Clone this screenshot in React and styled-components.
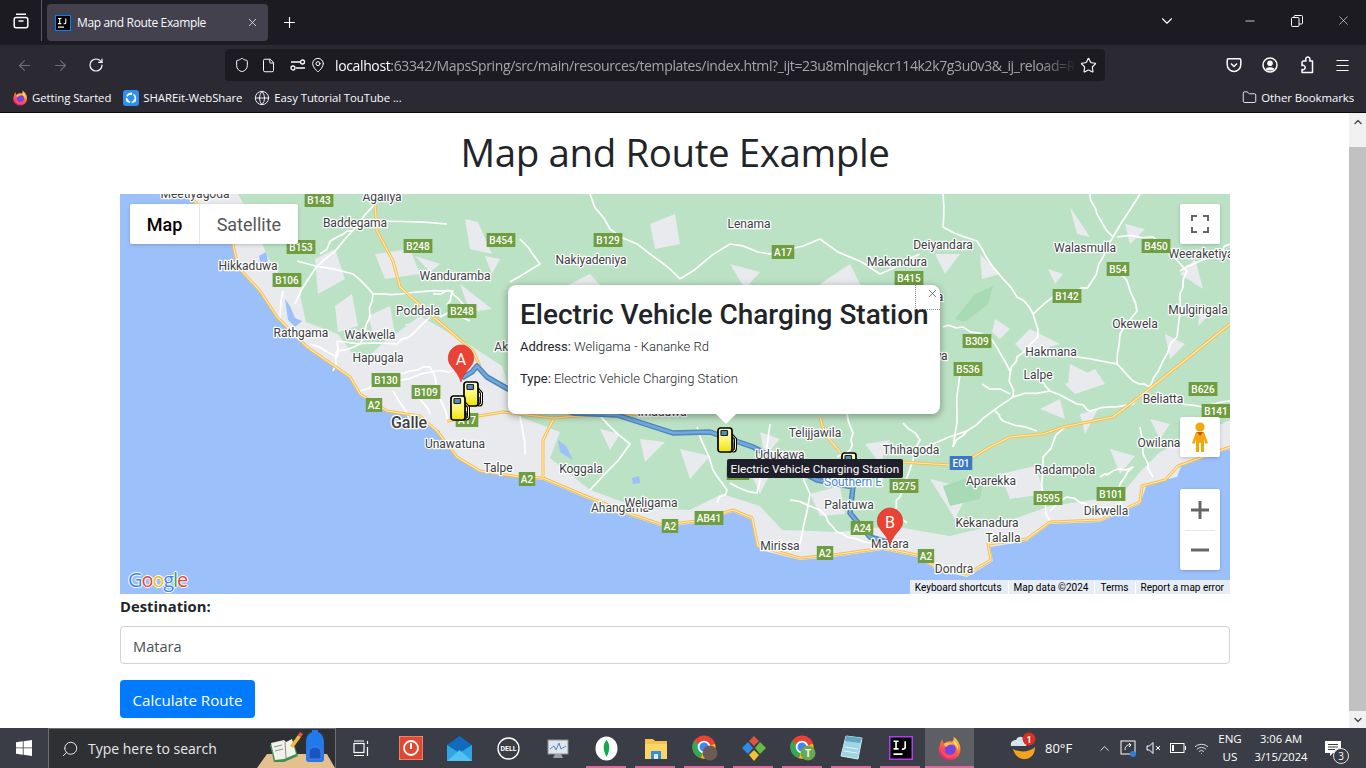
import React from "react";
import styled, { createGlobalStyle } from "styled-components";
import {
  ArrowLeft,
  ArrowRight,
  ChevronDown,
  ChevronUp,
  File,
  Folder,
  Globe,
  MapPin,
  Menu,
  Minus,
  Plus,
  RotateCw,
  Search,
  Shield,
  Star,
  Wifi,
  X,
} from "lucide-react";

const GlobalStyle = createGlobalStyle`
  html, body {
    margin: 0;
    padding: 0;
    height: 100%;
    overflow: hidden;
    font-family: "Open Sans", "Liberation Sans", sans-serif;
  }
  * { box-sizing: border-box; }
`;

const Screen = styled.div`
  width: 1366px;
  height: 768px;
  display: flex;
  flex-direction: column;
  overflow: hidden;
  background: #fff;
`;

/* browser chrome */
const TabStrip = styled.div`
  height: 45px;
  display: flex;
  align-items: flex-start;
  background: #1c1b22;
  color: #fbfbfe;
`;

const ViewButton = styled.div`
  width: 42px;
  height: 41px;
  display: flex;
  align-items: center;
  justify-content: center;
  border-right: 1px solid #5b5b66;
`;

const Tab = styled.div`
  width: 221px;
  height: 37px;
  margin: 4px 0 0 5px;
  padding: 0 9px 0 8px;
  display: flex;
  align-items: center;
  background: #42414d;
  border-radius: 4px;
  font-size: 12px;
  letter-spacing: -0.35px;
`;

const TabTitle = styled.span`
  flex: 1;
  margin-left: 6px;
  white-space: nowrap;
`;

const NewTab = styled.div`
  width: 42px;
  height: 37px;
  margin-top: 4px;
  display: flex;
  align-items: center;
  justify-content: center;
`;

const StripSpacer = styled.div`
  flex: 1;
`;

const WindowButton = styled.div`
  width: ${(p) => p.$w || 47}px;
  height: 41px;
  display: flex;
  align-items: center;
  justify-content: center;
`;

const Toolbar = styled.div`
  height: 40px;
  display: flex;
  align-items: center;
  background: #2b2a33;
  color: #fbfbfe;
`;

const NavButton = styled.div`
  width: 36px;
  height: 36px;
  display: flex;
  align-items: center;
  justify-content: center;
  color: ${(p) => (p.$off ? "#6f6e76" : "#fbfbfe")};
`;

const NavGroup = styled.div`
  width: 225px;
  padding-left: 6px;
  display: flex;
`;

const UrlBar = styled.div`
  width: 880px;
  height: 32px;
  padding: 0 6px 0 8px;
  display: flex;
  align-items: center;
  background: #1c1b22;
  border-radius: 4px;
`;

const UrlIcon = styled.div`
  width: ${(p) => p.$w}px;
  display: flex;
  justify-content: center;
  flex: none;
`;

const UrlText = styled.div`
  flex: 1;
  margin-left: 9px;
  overflow: hidden;
  white-space: nowrap;
  font-size: 14px;
  letter-spacing: -0.37px;
  color: #a5a5ab;
  -webkit-mask-image: linear-gradient(to right, #000 95%, transparent 100%);
  mask-image: linear-gradient(to right, #000 95%, transparent 100%);

  b {
    font-weight: 400;
    color: #fbfbfe;
  }
`;

const RightTools = styled.div`
  margin-left: 111px;
  display: flex;
`;

const Bookmarks = styled.div`
  height: 28px;
  padding: 0 12px 2px 12px;
  display: flex;
  align-items: center;
  background: #2b2a33;
  color: #fbfbfe;
  font-size: 11.4px;
  letter-spacing: -0.08px;
  border-bottom: 1px solid #0c0c0d;
`;

const Bookmark = styled.div`
  display: flex;
  align-items: center;
  gap: 4px;
  margin-right: 12px;
  white-space: nowrap;

  &:last-child {
    margin: 0 0 0 auto;
  }
`;

/* page */
const PageRow = styled.div`
  flex: 1;
  min-height: 0;
  display: flex;
`;

const Page = styled.main`
  flex: 1;
  padding: 15px 119px 0 120px;
  color: #212529;
`;

const Heading = styled.h1`
  margin: 0 0 18px;
  text-align: center;
  font-size: 38.5px;
  line-height: 48px;
  font-weight: 400;
  letter-spacing: -0.4px;
`;

const MapBox = styled.div`
  position: relative;
  width: 1110px;
  height: 400px;
  overflow: hidden;
  background: #9cc0f9;
`;

const MapCanvas = styled.svg`
  display: block;
`;

const Place = styled.text`
  font: ${(p) => (p.$big ? "500 16px" : "400 12px")} Roboto, sans-serif;
  fill: ${(p) => p.$fill || "#3c4043"};
  stroke: #fff;
  stroke-width: 2.5px;
  stroke-linejoin: round;
  paint-order: stroke;
  text-anchor: middle;
  dominant-baseline: central;
`;

const ShieldText = styled.text`
  font: 500 10px Roboto, sans-serif;
  fill: #fff;
  text-anchor: middle;
  dominant-baseline: central;
`;

const PinLetter = styled.text`
  font: 400 16px Roboto, sans-serif;
  fill: #fff;
  text-anchor: middle;
  dominant-baseline: central;
`;

const MapTypes = styled.div`
  position: absolute;
  left: 10px;
  top: 10px;
  height: 40px;
  display: flex;
  background: #fff;
  border-radius: 2px;
  box-shadow: 0 1px 4px -1px rgba(0, 0, 0, 0.3);
  font: 18px Roboto, sans-serif;
`;

const MapType = styled.div`
  height: 40px;
  padding: 0 16.7px;
  display: flex;
  align-items: center;
  color: ${(p) => (p.$on ? "#000" : "#565656")};
  font-weight: ${(p) => (p.$on ? 500 : 400)};
  border-right: ${(p) => (p.$on ? "1px solid #e6e6e6" : "0")};
`;

const CtrlButton = styled.div`
  position: absolute;
  right: 10px;
  top: ${(p) => p.$top}px;
  width: 40px;
  height: ${(p) => p.$h || 40}px;
  display: flex;
  flex-direction: column;
  align-items: center;
  justify-content: center;
  background: #fff;
  border-radius: 2px;
  box-shadow: 0 1px 4px -1px rgba(0, 0, 0, 0.3);
  color: #666;
`;

const ZoomPart = styled.div`
  width: 30px;
  height: 40px;
  display: flex;
  align-items: center;
  justify-content: center;
  border-top: ${(p) => (p.$line ? "1px solid #e6e6e6" : "0")};
`;

const GoogleLogo = styled.div`
  position: absolute;
  left: 8px;
  bottom: 2px;
  font: 500 20px/24px "Open Sans", sans-serif;
  letter-spacing: -1.1px;
  text-shadow: -1px 0 #fff, 1px 0 #fff, 0 -1px #fff, 0 1px #fff;
`;

const LogoLetter = styled.span`
  color: ${(p) => p.$c};
`;

const Attribution = styled.div`
  position: absolute;
  right: 0;
  bottom: 0;
  height: 14px;
  padding-top: 1px;
  display: flex;
  align-items: center;
  background: rgba(245, 245, 245, 0.85);
  font: 10px/13px Roboto, sans-serif;
  color: #000;
`;

const AttrItem = styled.span`
  padding: 0 6px 0 5px;
  border-left: 1px solid #fff;
  white-space: nowrap;

  &:first-child {
    border-left: 0;
  }
`;

const Popup = styled.div`
  position: absolute;
  left: 388px;
  top: 91px;
  width: 432px;
  height: 129px;
  padding: 13px 12px 0;
  background: #fff;
  border-radius: 8px;
  box-shadow: 0 2px 7px 1px rgba(0, 0, 0, 0.3);
  font: 300 13px/19px Roboto, sans-serif;
  color: #212529;

  &::after {
    content: "";
    position: absolute;
    left: 206px;
    top: 127px;
    width: 0;
    height: 0;
    border-left: 12px solid transparent;
    border-right: 12px solid transparent;
    border-top: 12px solid #fff;
  }
`;

const PopupTitle = styled.h3`
  margin: 0 0 5px;
  font: 500 28px/34px Roboto, sans-serif;
  white-space: nowrap;
`;

const PopupLine = styled.p`
  margin: 0 0 12.5px;

  strong {
    font-weight: 400;
  }
`;

const PopupClose = styled.div`
  position: absolute;
  right: 0;
  top: 0;
  width: 25px;
  height: 25px;
  padding: 2px 1px 0 0;
  display: flex;
  align-items: flex-start;
  justify-content: flex-end;
  color: #555;
  border-left: 1px dotted #888;
  border-bottom: 1px dotted #888;
`;

const Tip = styled.div`
  position: absolute;
  left: 607px;
  top: 265px;
  height: 19px;
  padding: 0 3.5px;
  display: flex;
  align-items: center;
  border-radius: 2px;
  background: #1f1f2b;
  color: #fff;
  font: 11.7px Roboto, sans-serif;
  white-space: nowrap;
`;

const Label = styled.label`
  display: block;
  margin: 4px 0 11px;
  font-size: 14.8px;
  line-height: 17px;
  font-weight: 700;
  color: #212529;
`;

const TextInput = styled.input`
  display: block;
  width: 100%;
  height: 38px;
  padding: 7px 12px 5px;
  border: 1px solid #ced4da;
  border-radius: 4px;
  font: 14.6px "Open Sans", sans-serif;
  color: #495057;
  outline: none;
`;

const SubmitButton = styled.button`
  display: block;
  margin-top: 16px;
  width: 135px;
  height: 38px;
  padding: 2px 0 0;
  border: 0;
  border-radius: 4px;
  background: #007bff;
  color: #fff;
  font: 15.15px "Open Sans", sans-serif;
`;

const ScrollBar = styled.div`
  width: 17px;
  display: flex;
  flex-direction: column;
  align-items: center;
  background: #f1f1f1;
`;

const ScrollArrow = styled.div`
  height: 17px;
  display: flex;
  align-items: center;
  justify-content: center;
  color: #505050;
`;

const ScrollThumb = styled.div`
  width: 17px;
  height: 564px;
  margin: 17px 0 0;
  background: #c1c1c1;
`;

/* taskbar */
const Taskbar = styled.footer`
  height: 40px;
  display: flex;
  align-items: stretch;
  background: #3a3d45;
  color: #fff;
`;

const StartButton = styled.div`
  width: 48px;
  display: flex;
  align-items: center;
  justify-content: center;
`;

const SearchBox = styled.div`
  width: 288px;
  padding-left: 12px;
  display: flex;
  align-items: center;
  gap: 9px;
  background: #2f3033;
  border: 1px solid #6b6e73;
  border-width: 1px 1px 0 1px;
  font-size: 14px;
  color: #e8e8e8;
`;

const TaskIcons = styled.div`
  margin-left: 1px;
  display: flex;
`;

const TaskIcon = styled.div`
  width: 49px;
  display: flex;
  align-items: center;
  justify-content: center;
  position: relative;
  background: ${(p) => (p.$active ? "#5e5f64" : "transparent")};

  &::after {
    content: "";
    display: ${(p) => (p.$open ? "block" : "none")};
    position: absolute;
    left: ${(p) => (p.$active ? 0 : 4)}px;
    right: ${(p) => (p.$active ? 0 : 5)}px;
    bottom: 0;
    height: 2px;
    background: #e0699a;
  }
`;

const Weather = styled.div`
  width: 80px;
  margin-left: 36px;
  display: flex;
  align-items: center;
  gap: 7px;
  font-size: 13px;
`;

const Tray = styled.div`
  width: 120px;
  padding: 0 1px 0 7px;
  display: flex;
  align-items: center;
  justify-content: space-between;
`;

const Lang = styled.div`
  width: 40px;
  padding-top: 2px;
  text-align: center;
  font-size: 11.6px;
  line-height: 18px;
`;

const Clock = styled.div`
  width: 62px;
  padding-top: 2px;
  text-align: center;
  font-size: 11.2px;
  line-height: 18px;
`;

const Notify = styled.div`
  position: relative;
  flex: 1;
  padding-left: 13px;
  display: flex;
  align-items: center;
`;

const NotifyBadge = styled.span`
  position: absolute;
  left: 21px;
  top: 20px;
  width: 16px;
  height: 16px;
  border: 1px solid #ddd;
  border-radius: 50%;
  background: #3a3d45;
  font-size: 10px;
  line-height: 14px;
  text-align: center;
`;

/* map data, in map coordinates */
const landEdge =
  "68,0 113,50 118,73 140,97 157,123 187,153 230,183 240,200 267,217 300,222 317,237 337,263 360,277 400,283 423,286 463,303 513,323 543,333 577,329 613,318 632,326 640,356 680,366 713,363 763,356 797,363 817,376 847,383 873,367 870,353 907,347 930,330 980,328 1020,310 1027,290 1057,283 1062,270 1110,255 1110,0";

const greenEdge =
  "118,0 135,30 147,62 160,82 178,92 186,128 218,140 240,170 262,150 300,122 345,148 382,172 398,222 440,238 430,264 470,296 520,314 570,316 602,300 640,312 662,336 720,338 772,332 830,342 880,330 930,312 1000,302 1020,278 1040,258 1110,226 1110,0";

const grayPatches = [
  "195,65 215,55 225,85 198,100",
  "255,60 290,55 300,80 265,85",
  "345,25 358,28 372,60 350,55",
  "295,62 320,70 310,78",
  "365,62 380,65 372,80",
  "340,90 372,115 350,118",
  "215,112 232,100 238,132 218,138",
  "248,122 270,112 275,140 255,145",
  "285,130 300,128 292,150",
  "168,100 182,92 178,118",
  "440,95 470,80 490,102 450,110",
  "530,30 555,20 560,50 535,55",
  "610,70 640,78 625,95",
  "700,90 730,70 745,100 715,105",
  "480,235 500,240 490,256",
  "520,245 545,248 525,268",
  "560,255 590,262 570,285",
  "640,238 660,245 645,262",
  "625,265 650,280 640,300",
  "690,300 720,292 725,320 700,322",
  "745,250 770,246 760,270",
  "810,285 850,295 835,325",
  "880,280 915,272 925,300 890,305",
  "950,13 970,43 957,40",
  "860,60 880,80 862,85",
  "875,125 890,135 880,145 872,138",
  "910,135 940,150 905,160 895,150",
  "950,170 970,180 948,190",
  "945,190 975,175 985,190 955,200",
  "1005,30 1025,35 1010,50",
  "928,75 943,80 935,90",
  "1080,110 1090,120 1078,132",
  "1030,225 1050,230 1040,245",
  "990,255 1015,262 1000,280",
  "1060,80 1075,65 1083,95",
  "815,60 840,60 825,80",
  "780,130 800,125 790,150",
  "800,185 815,180 808,205",
  "920,215 940,205 945,225",
  "960,220 978,215 965,240",
  "1045,140 1065,150 1050,165",
];

const darkGreen = ["835,125 855,100 873,92 868,110 845,128", "823,292 845,285 863,290 860,305 830,312"];

const water = [
  "165,105 170,112 175,124 182,127 175,133 168,126",
  "139,62 146,58 148,68 141,74",
  "438,246 446,252 453,266 446,262 440,258",
  "512,284 519,282 520,289 513,290",
  "313,234 320,237 317,245 311,243",
];

const roads = [
  "970,0 977,20 993,43 983,63 970,90 957,97 933,103 913,120 918,143 897,163 890,180 893,203 873,217 847,237 833,253",
  "823,0 823,33 857,47 873,73 897,103 913,120",
  "993,43 1020,0",
  "997,43 1033,43 1067,77 1060,100 1057,143 1043,167 1030,193",
  "918,157 957,163 997,170 1013,187 1030,193",
  "997,170 1000,140 1017,117 1007,87 998,80",
  "930,197 957,210 970,217 1013,210 1030,193",
  "920,187 930,197 893,203",
  "875,217 883,227 917,237",
  "945,233 923,263 923,303 930,327",
  "1060,77 1080,67 1097,57 1110,50",
  "1057,207 1083,213 1110,207",
  "1020,233 1023,260 1033,283",
  "980,283 993,277 1013,273 1000,290 1000,310",
  "930,317 947,303 967,310",
  "823,133 843,133 870,143 890,177",
  "862,190 890,200",
  "847,237 790,257",
  "177,67 233,80 253,100 250,123 240,150 217,157 213,177",
  "237,33 257,27 327,30",
  "255,10 225,45 195,75 175,110",
  "253,100 280,100 330,97 343,110 320,123",
  "310,123 293,140 277,150 217,147",
  "277,187 317,177 333,177 353,167",
  "273,197 290,227",
  "297,200 310,220",
  "163,97 160,125",
  "233,37 217,43 200,60",
  "217,147 217,163 190,150",
  "290,177 263,183 240,197",
  "290,177 310,173 317,193 328,227",
  "313,100 333,97 327,110 350,127",
  "400,45 420,70 390,88",
  "470,0 490,35 530,60 560,85",
  "560,85 610,50 650,60 700,45 760,80 800,60",
  "577,233 593,276 607,296 597,309",
  "640,286 637,299 610,289",
  "727,219 733,239 730,256 717,263",
  "780,303 773,316 787,329",
  "783,229 800,246 793,266 780,303",
  "840,180 833,253",
  "650,230 640,286",
  "480,222 510,250 470,296",
  "400,222 405,260",
  "673,260 690,300 680,350",
  "670,306 700,316 713,333 727,343 752,349",
];

const highways = [
  "1110,130 1023,200 993,223 943,233 923,240 890,243 870,253 850,265 830,271 780,268 720,266",
  "68,0 113,50 118,73 140,97 157,123 187,153 230,183 240,200 267,217 300,222 317,237 337,263 360,277 400,283 423,284 463,301 513,321 543,331 577,327 613,316 632,324 638,352 680,364 713,361 763,354 797,361 817,374 847,380 871,366 868,350 907,345 930,328 980,326 1020,308 1022,292 1045,286 1058,272 1110,253",
  "255,10 257,37 273,67 280,93 310,120 353,157 360,172",
  "327,227 383,218 433,224 497,219 540,222",
  "433,226 423,246 423,283",
  "700,223 705,240 720,258",
];

const route = "342,184 352,178 357,172 367,183 388,195 453,219 497,221 553,239 590,238 633,253 697,286 733,293 730,319 750,343 770,349";

const places = [
  ["Meetiyagoda", 75, 0],
  ["Agaliya", 262, 3],
  ["Baddegama", 235, 29],
  ["Hikkaduwa", 128, 72],
  ["Wanduramba", 335, 82],
  ["Poddala", 298, 117],
  ["Rathgama", 181, 139],
  ["Wakwella", 250, 141],
  ["Hapugala", 258, 164],
  ["Unawatuna", 335, 250],
  ["Talpe", 378, 274],
  ["Akmeemana", 408, 153],
  ["Lenama", 629, 30],
  ["Nakiyadeniya", 471, 66],
  ["Deiyandara", 823, 51],
  ["Makandura", 777, 68],
  ["Walasmulla", 965, 54],
  ["Weeraketiya", 1081, 60],
  ["Mulgirigala", 1078, 116],
  ["Okewela", 1015, 130],
  ["Hakmana", 931, 158],
  ["Lalpe", 918, 181],
  ["Beliatta", 1043, 205],
  ["Owilana", 1039, 249],
  ["Thihagoda", 791, 256],
  ["Telijjawila", 695, 239],
  ["Imaduwa", 542, 218],
  ["Koggala", 461, 275],
  ["Ahangama", 500, 314],
  ["Weligama", 531, 309],
  ["Mirissa", 660, 352],
  ["Palatuwa", 729, 311],
  ["Radampola", 945, 276],
  ["Aparekka", 871, 287],
  ["Kekanadura", 867, 329],
  ["Talalla", 883, 344],
  ["Dikwella", 986, 317],
  ["Dondra", 834, 375],
  ["Udukawa", 660, 261],
  ["Matara", 770, 350],
  ["Athuraliya", 801, 162],
  ["Mawarala", 797, 103],
];

const shields = [
  ["B143", 199, 6],
  ["B153", 181, 53],
  ["B248", 298, 52],
  ["B454", 381, 46],
  ["B106", 167, 86],
  ["B248", 342, 117],
  ["B130", 266, 186],
  ["B109", 306, 198],
  ["A2", 254, 211],
  ["A17", 347, 226],
  ["B129", 488, 46],
  ["A17", 663, 58],
  ["B415", 789, 84],
  ["B309", 857, 147],
  ["B536", 848, 175],
  ["B142", 947, 102],
  ["B450", 1036, 52],
  ["B54", 998, 75],
  ["B626", 1083, 195],
  ["B141", 1096, 217],
  ["B275", 784, 292],
  ["B595", 928, 304],
  ["B101", 991, 300],
  ["A2", 806, 362],
  ["A2", 407, 285],
  ["A2", 550, 332],
  ["AB41", 589, 324],
  ["A2", 705, 359],
  ["A24", 742, 334],
  ["E01", 841, 269, true],
  ["A17", 618, 279],
];

// small seeded noise so hand-listed roads don't look like straight rulers
const wiggle = (points, amount) => {
  const pts = points.split(" ").map((p) => p.split(",").map(Number));
  let seed = pts.length * 7 + pts[0][0];
  const noise = () => {
    seed = (seed * 9301 + 49297) % 233280;
    return (seed / 233280 - 0.5) * amount * 2;
  };
  const out = [];
  pts.forEach((p, i) => {
    if (i > 0) {
      const a = pts[i - 1];
      [0.33, 0.66].forEach((t) => {
        out.push(`${(a[0] + (p[0] - a[0]) * t + noise()).toFixed(1)},${(a[1] + (p[1] - a[1]) * t + noise()).toFixed(1)}`);
      });
    }
    out.push(p.join(","));
  });
  return out.join(" ");
};

const FuelMarker = ({ x, y }) => (
  <g transform={`translate(${x - 9} ${y - 13})`}>
    <path d="M14 7 L18.5 12 V21 Q18.5 24 16.5 24 Q15 24 15 21 V16" fill="none" stroke="#000" strokeWidth="3" />
    <path d="M14 7 L18.5 12 V21 Q18.5 24 16.5 24 Q15 24 15 21 V16" fill="none" stroke="#fff6a8" strokeWidth="1" />
    <rect x="1" y="1" width="14" height="24" rx="2.5" fill="url(#fuelFill)" stroke="#000" strokeWidth="1.7" />
    <rect x="4" y="3.5" width="6.5" height="5" rx="0.8" fill="#4f8fc0" stroke="#222" strokeWidth="1.2" />
  </g>
);

const RedPin = ({ x, y, letter }) => (
  <g transform={`translate(${x} ${y})`}>
    <path
      d="M0 0 C-2 -7 -6 -11 -9.5 -15.5 C-11.6 -18 -12.7 -20.5 -12.7 -24 C-12.7 -31 -7 -37 0 -37 C7 -37 12.7 -31 12.7 -24 C12.7 -20.5 11.6 -18 9.5 -15.5 C6 -11 2 -7 0 0 Z"
      fill="#ea4335"
      stroke="#c5332a"
      strokeWidth="0.6"
    />
    <PinLetter x="0" y="-23">
      {letter}
    </PinLetter>
  </g>
);

const RoadMap = () => (
  <MapCanvas width="1110" height="400" viewBox="0 0 1110 400">
    <defs>
      <linearGradient id="fuelFill" x1="0" y1="0" x2="0" y2="1">
        <stop offset="0" stopColor="#fffdd0" />
        <stop offset="0.55" stopColor="#fbf56a" />
        <stop offset="1" stopColor="#efe300" />
      </linearGradient>
    </defs>
    <rect width="1110" height="400" fill="#9cc0f9" />
    <polygon points={landEdge} fill="#e8eaed" />
    <polygon points={greenEdge} fill="#bce2c5" />
    {grayPatches.map((p) => (
      <polygon key={p} points={p} fill="#e8eaed" />
    ))}
    {darkGreen.map((p) => (
      <polygon key={p} points={p} fill="#a8dab5" />
    ))}
    {water.map((p) => (
      <polygon key={p} points={p} fill="#9cc0f9" />
    ))}
    {roads.map((p) => (
      <polyline key={p} points={wiggle(p, 2)} fill="none" stroke="#fff" strokeWidth="1.7" strokeLinejoin="round" />
    ))}
    {highways.map((p) => (
      <polyline key={p} points={p} fill="none" stroke="#f7bd4f" strokeWidth="3" strokeLinejoin="round" />
    ))}
    {highways.map((p) => (
      <polyline key={`${p}-in`} points={p} fill="none" stroke="#fde9b0" strokeWidth="1.2" strokeLinejoin="round" />
    ))}
    <polyline points={route} fill="none" stroke="#4f88bd" strokeWidth="5.5" strokeLinejoin="round" />
    <polyline points={route} fill="none" stroke="#74a9dc" strokeWidth="2.5" strokeLinejoin="round" />
    {places.map(([name, x, y]) => (
      <Place key={name} x={x} y={y}>
        {name}
      </Place>
    ))}
    <Place x="733" y="288" $fill="#4a86c8">
      Southern E
    </Place>
    <Place x="289" y="228" $big>
      Galle
    </Place>
    {shields.map(([name, x, y, blue]) => {
      const w = name.length * 6.2 + 4;
      return (
        <g key={`${name}${x}`}>
          <rect x={x - w / 2} y={y - 7} width={w} height="14" fill={blue ? "#3b78c6" : "#6f9e41"} />
          <ShieldText x={x} y={y}>
            {name}
          </ShieldText>
        </g>
      );
    })}
    <RedPin x={341} y={188} letter="A" />
    <FuelMarker x={352} y={200} />
    <FuelMarker x={339} y={214} />
    <FuelMarker x={606} y={246} />
    <FuelMarker x={730} y={271} />
    <RedPin x={770} y={351} letter="B" />
  </MapCanvas>
);

const FirefoxIcon = ({ size = 16 }) => (
  <svg width={size} height={size} viewBox="0 0 32 32">
    <defs>
      <linearGradient id="ffFill" x1="0.8" y1="0" x2="0.25" y2="1">
        <stop offset="0" stopColor="#ffd23f" />
        <stop offset="0.45" stopColor="#ff7139" />
        <stop offset="1" stopColor="#e31587" />
      </linearGradient>
    </defs>
    <path
      d="M27 7 C25 4 23 2 21 1 C22 4 21 6 19 7 C15 6 11 7 9 10 C8 8 7 7 7 4 C5 7 4 9 4 11 C2 15 2 19 3 22 C5 27 10 31 16 31 C24 31 30 25 30 17 C30 13 29 10 27 7 Z"
      fill="url(#ffFill)"
    />
    <circle cx="17" cy="17" r="7" fill="#7542e5" />
    <path d="M5 14 C7 22 13 26 19 24 C23 23 25 20 25 17 C26 22 23 28 16 28 C9 28 5 22 5 14 Z" fill="#ff4f5e" />
    <path d="M9 10 C12 8 18 8 21 11 C17 10 13 12 12 14 C10 14 9 12 9 10 Z" fill="#ffbd4f" />
    <path d="M22 6 C26 9 28 14 27 19 C26 14 24 11 21 10 Z" fill="#ffe57a" />
  </svg>
);

const IntellijIcon = ({ size = 16, edge = "#087cfa" }) => (
  <svg width={size} height={size} viewBox="0 0 16 16">
    <rect x="0.5" y="0.5" width="15" height="15" fill="#000" stroke={edge} />
    <rect x="3" y="11.5" width="6" height="1.2" fill="#fff" />
    <path d="M3 3.5 H6.4 M4.7 3.5 V8.6 M3 8.6 H6.4 M10.8 3.5 V7.4 Q10.8 8.7 9.5 8.7 H8.6" fill="none" stroke="#fff" strokeWidth="1.1" />
  </svg>
);

const ViewIcon = () => (
  <svg width="16" height="16" viewBox="0 0 16 16" fill="none" stroke="#fbfbfe" strokeWidth="1.5">
    <rect x="1.2" y="4.5" width="13.6" height="10.3" rx="2" />
    <path d="M3 1.2 H13 M5.5 8 H10.5" />
  </svg>
);

const RestoreIcon = () => (
  <svg width="12" height="12" viewBox="0 0 12 12" fill="none" stroke="#fbfbfe" strokeWidth="1">
    <rect x="0.5" y="2.5" width="7.5" height="9" rx="1" />
    <path d="M3 2.5 V1.5 Q3 0.5 4 0.5 H10.5 Q11.5 0.5 11.5 1.5 V8 Q11.5 9 10.5 9 H8" />
  </svg>
);

const PermissionIcon = () => (
  <svg width="16" height="12" viewBox="0 0 16 12" fill="none" stroke="#fbfbfe" strokeWidth="1.3">
    <circle cx="3" cy="9" r="2" />
    <circle cx="12.5" cy="3" r="2" />
    <path d="M1 3 H10 M6 9 H15" />
  </svg>
);

const PocketIcon = () => (
  <svg width="16" height="16" viewBox="0 0 16 16" fill="none" stroke="#fbfbfe" strokeWidth="1.5">
    <path d="M2.5 1.8 H13.5 Q14.8 1.8 14.8 3 V7.5 C14.8 11.5 11.5 14.5 8 14.5 C4.5 14.5 1.2 11.5 1.2 7.5 V3 Q1.2 1.8 2.5 1.8 Z" />
    <path d="M5 6.5 L8 9.5 L11 6.5" />
  </svg>
);

const AccountIcon = () => (
  <svg width="16" height="16" viewBox="0 0 16 16">
    <circle cx="8" cy="8" r="7" fill="none" stroke="#fbfbfe" strokeWidth="1.5" />
    <circle cx="8" cy="6.2" r="2.8" fill="#fbfbfe" />
    <path d="M3.5 12 C5 9.8 11 9.8 12.5 12 C11 14 5 14 3.5 12 Z" fill="#fbfbfe" />
  </svg>
);

const ExtensionIcon = () => (
  <svg width="16" height="18" viewBox="0 0 16 18" fill="none" stroke="#fbfbfe" strokeWidth="1.5" strokeLinejoin="round">
    <path d="M5.5 5 H8 C7.2 3 7.8 1 9.8 1 C11.8 1 12.4 3 11.6 5 H14.5 V16.5 H4 V13.5 C6 14 7.2 13 7.2 11.5 C7.2 10 6 9 4 9.5 V7 Q4 5 5.5 5 Z" />
  </svg>
);

const ShareitIcon = () => (
  <svg width="16" height="16" viewBox="0 0 16 16">
    <rect width="16" height="16" rx="3" fill="#2c8ef0" />
    <circle cx="8" cy="8" r="4.4" fill="none" stroke="#fff" strokeWidth="1.6" strokeDasharray="6 1.6" />
    <circle cx="8" cy="3.8" r="1.3" fill="#fff" />
    <circle cx="4.2" cy="10.4" r="1.3" fill="#fff" />
    <circle cx="11.8" cy="10.4" r="1.3" fill="#fff" />
  </svg>
);

const WindowsLogo = () => (
  <svg width="16" height="16" viewBox="0 0 16 16" fill="#fff">
    <path d="M0 2.3 L6.8 1.3 V7.5 H0 Z M7.6 1.2 L16 0 V7.5 H7.6 Z M0 8.3 H6.8 V14.7 L0 13.7 Z M7.6 8.3 H16 V16 L7.6 14.8 Z" />
  </svg>
);

const SearchArt = () => (
  <svg width="78" height="39" viewBox="0 0 78 39" style={{ marginLeft: "auto", flex: "none" }}>
    <path d="M0 39 L10 25 H70 L78 39 Z" fill="#e3c08e" />
    <path d="M13 16 L27 13 L30 15 L36 12 L41 27 L27 33 L17 33 Z" fill="#3f8f52" />
    <path d="M14 14 L27 11 L29 13 L35 10 L39 25 L27 30 L18 31 Z" fill="#f1f3ea" />
    <path d="M28 13 L29 29 M17 18 L25 16 M18 22 L26 20" stroke="#8a9488" fill="none" />
    <path d="M33 17 L41 6 L44 8 L36 19 Z" fill="#f5b642" />
    <path d="M41 6 L43 3 L46 5 L44 8 Z" fill="#e2574c" />
    <path d="M49 30 V14 C49 7 52 4 55 3 V1 H61 V3 C64 4 67 7 67 14 V30 Q67 33 64 33 H52 Q49 33 49 30 Z" fill="#1f7bea" />
    <path d="M52 30 V24 C52 20 55 18 58 18 C61 18 64 20 64 24 V30 Z" fill="#1258c0" stroke="#8a6cf0" strokeWidth="0.8" />
  </svg>
);

const TaskViewIcon = () => (
  <svg width="17" height="17" viewBox="0 0 17 17" fill="none" stroke="#fff" strokeWidth="1.2">
    <rect x="1" y="3.5" width="10" height="9" />
    <path d="M1 1 H11 M1 15.5 H11 M14.5 1 V4 M14.5 7 V16" />
  </svg>
);

const PowerApp = () => (
  <svg width="24" height="24" viewBox="0 0 24 24">
    <rect width="24" height="24" rx="2" fill="#e0492f" stroke="#f5b7a5" />
    <circle cx="12" cy="12" r="7" fill="none" stroke="#fff" strokeWidth="1.8" />
    <path d="M12 7 V13" stroke="#fff" strokeWidth="2" />
  </svg>
);

const MailApp = () => (
  <svg width="25" height="25" viewBox="0 0 25 25">
    <path d="M12.5 0 L25 9 V25 H0 V9 Z" fill="#0f6cbd" />
    <path d="M0 9 L12.5 17 L25 9 V25 H0 Z" fill="#2ea6e6" />
    <path d="M0 25 L12.5 14 L25 25 Z" fill="#54c2f0" />
  </svg>
);

const DellApp = () => (
  <svg width="23" height="23" viewBox="0 0 23 23">
    <circle cx="11.5" cy="11.5" r="10.5" fill="none" stroke="#fff" strokeWidth="1.3" />
    <text x="11.5" y="14" fill="#fff" fontSize="7" fontWeight="700" textAnchor="middle" fontFamily="Roboto">
      DELL
    </text>
  </svg>
);

const MonitorApp = () => (
  <svg width="24" height="24" viewBox="0 0 24 24">
    <rect x="2" y="4" width="20" height="14" fill="#dfe5ea" stroke="#8a9096" />
    <path d="M4 13 L8 10 L10 14 L13 7 L15 13 L20 10" fill="none" stroke="#4c88c5" />
    <path d="M9 18 H15 L17 22 H7 Z" fill="#9aa0a6" />
  </svg>
);

const MongoApp = () => (
  <svg width="23" height="25" viewBox="0 0 23 25">
    <ellipse cx="11.5" cy="12.5" rx="11" ry="12" fill="#fff" />
    <path d="M11.5 4 C15 8 15.5 13 11.5 21 C7.5 13 8 8 11.5 4 Z" fill="#13aa52" />
  </svg>
);

const FolderApp = () => (
  <svg width="24" height="23" viewBox="0 0 24 23">
    <path d="M1 2 H9 L11 4 H23 V22 H1 Z" fill="#f4c24f" />
    <rect x="1" y="7" width="22" height="15" fill="#fcd566" />
    <rect x="7" y="14" width="10" height="8" fill="#2f8fdc" />
    <rect x="10" y="17" width="4" height="5" fill="#d7ecfb" />
  </svg>
);

const ChromeApp = ({ badge, badgeText }) => (
  <svg width="26" height="26" viewBox="0 0 26 26">
    <circle cx="12" cy="12" r="11.5" fill="#ea4335" />
    <path d="M12 12 L2 6 A11.5 11.5 0 0 0 9 23.2 Z" fill="#34a853" />
    <path d="M12 12 L23 9 A11.5 11.5 0 0 1 9 23.2 Z" fill="#fbbc05" />
    <circle cx="12" cy="12" r="5.4" fill="#4285f4" stroke="#fff" strokeWidth="1.8" />
    <circle cx="18" cy="18" r="7.5" fill={badge} />
    <text x="18" y="21.5" fill="#fff" fontSize="10" fontWeight="700" textAnchor="middle" fontFamily="Roboto">
      {badgeText}
    </text>
  </svg>
);

const GitApp = () => (
  <svg width="24" height="25" viewBox="0 0 24 25">
    <path d="M12 0 L17 5 L12 10 L7 5 Z" fill="#e05243" />
    <path d="M6 6 L11 12 L6 18 L0 12 Z" fill="#2d8de6" />
    <path d="M18 6 L24 12 L18 18 L13 12 Z" fill="#66bb46" />
    <path d="M12 14 L17 19 L12 25 L7 19 Z" fill="#f4c430" />
  </svg>
);

const NotepadApp = () => (
  <svg width="23" height="26" viewBox="0 0 23 26">
    <path d="M6 1 L22 3 L18 24 L1 21 Z" fill="#9fd5e2" stroke="#d5eef4" />
    <path d="M6 1 L22 3 L20 8 L5 6 Z" fill="#5fa9c2" />
    <path d="M5 12 L18 14 M4 16 L17 18" stroke="#e8f6fa" />
  </svg>
);

const WeatherIcon = () => (
  <svg width="28" height="32" viewBox="0 0 28 32">
    <path d="M3 17 C5 24 10 28 16 27 C22 26 25 21 25 15 C20 20 10 21 3 17 Z" fill="#f5a31f" />
    <path d="M1 14 C0 10 3 8 6 8 C8 3 14 4 15 9 C18 9 18 14 15 14 Z" fill="#d6e4f2" />
    <circle cx="19" cy="7" r="6.5" fill="#d93025" />
    <text x="19" y="10.5" fill="#fff" fontSize="9" fontWeight="700" textAnchor="middle" fontFamily="Roboto">
      1
    </text>
  </svg>
);

const TrayNetBox = () => (
  <svg width="17" height="17" viewBox="0 0 17 17" fill="none" stroke="#fff" strokeWidth="1">
    <rect x="1" y="1" width="14" height="13" />
    <path d="M5 10 C5 6 8 4 11 5 M11 5 L9 3 M11 5 L9 7" />
    <circle cx="13" cy="14" r="3" fill="#2f7ed8" stroke="none" />
  </svg>
);

const VolumeOff = () => (
  <svg width="16" height="14" viewBox="0 0 16 14" fill="none" stroke="#fff" strokeWidth="1">
    <path d="M1 5 H3.5 L7 1.5 V12.5 L3.5 9 H1 Z" />
    <path d="M10 5 L14 9 M14 5 L10 9" />
  </svg>
);

const BatteryIcon = () => (
  <svg width="16" height="10" viewBox="0 0 16 10" fill="none" stroke="#fff" strokeWidth="1">
    <rect x="0.5" y="0.5" width="13.5" height="9" />
    <rect x="2" y="2" width="2" height="6" fill="#fff" stroke="none" />
    <path d="M15.5 3 V7" />
  </svg>
);

const NotifyIcon = () => (
  <svg width="16" height="15" viewBox="0 0 16 15">
    <path d="M0 0 H16 V12 H8 L5 15 V12 H0 Z" fill="#fff" />
    <path d="M3 3.5 H13 M3 6 H13 M3 8.5 H10" stroke="#3a3d45" />
  </svg>
);

const apps = [
  { key: "taskview", icon: <TaskViewIcon /> },
  { key: "power", icon: <PowerApp /> },
  { key: "mail", icon: <MailApp /> },
  { key: "dell", icon: <DellApp /> },
  { key: "monitor", icon: <MonitorApp /> },
  { key: "mongo", icon: <MongoApp />, open: true },
  { key: "folder", icon: <FolderApp />, open: true },
  { key: "chrome1", icon: <ChromeApp badge="#6b5a55" badgeText="" />, open: true },
  { key: "git", icon: <GitApp />, open: true },
  { key: "chrome2", icon: <ChromeApp badge="#6aa84f" badgeText="T" />, open: true },
  { key: "notepad", icon: <NotepadApp />, open: true },
  { key: "idea", icon: <IntellijIcon size={24} edge="#b13cf0" />, open: true },
  { key: "firefox", icon: <FirefoxIcon size={25} />, open: true, active: true },
];

const logo = [
  ["G", "#4285f4"],
  ["o", "#ea4335"],
  ["o", "#fbbc05"],
  ["g", "#4285f4"],
  ["l", "#34a853"],
  ["e", "#ea4335"],
];

const App = () => {
  return (
    <Screen>
      <GlobalStyle />
      <TabStrip>
        <ViewButton>
          <ViewIcon />
        </ViewButton>
        <Tab>
          <IntellijIcon />
          <TabTitle>Map and Route Example</TabTitle>
          <X size={13} strokeWidth={1.4} />
        </Tab>
        <NewTab>
          <Plus size={17} strokeWidth={1.6} />
        </NewTab>
        <StripSpacer />
        <WindowButton $w={60}>
          <ChevronDown size={18} strokeWidth={1.5} />
        </WindowButton>
        <WindowButton $w={29} />
        <WindowButton>
          <Minus size={14} strokeWidth={1.3} />
        </WindowButton>
        <WindowButton>
          <RestoreIcon />
        </WindowButton>
        <WindowButton $w={46}>
          <X size={15} strokeWidth={1} />
        </WindowButton>
      </TabStrip>
      <Toolbar>
        <NavGroup>
          <NavButton $off>
            <ArrowLeft size={17} strokeWidth={1.5} />
          </NavButton>
          <NavButton $off>
            <ArrowRight size={17} strokeWidth={1.5} />
          </NavButton>
          <NavButton>
            <RotateCw size={16} strokeWidth={1.8} />
          </NavButton>
        </NavGroup>
        <UrlBar>
          <UrlIcon $w={18}>
            <Shield size={16} strokeWidth={1.5} />
          </UrlIcon>
          <UrlIcon $w={35}>
            <File size={15} strokeWidth={1.6} />
          </UrlIcon>
          <UrlIcon $w={24}>
            <PermissionIcon />
          </UrlIcon>
          <UrlIcon $w={16}>
            <MapPin size={16} strokeWidth={1.5} />
          </UrlIcon>
          <UrlText>
            <b>localhost</b>:63342/MapsSpring/src/main/resources/templates/index.html?_ijt=23u8mlnqjekcr114k2k7g3u0v3&amp;_ij_reload=R
          </UrlText>
          <UrlIcon $w={22}>
            <Star size={17} strokeWidth={1.6} />
          </UrlIcon>
        </UrlBar>
        <RightTools>
          <NavButton>
            <PocketIcon />
          </NavButton>
          <NavButton>
            <AccountIcon />
          </NavButton>
          <NavButton>
            <ExtensionIcon />
          </NavButton>
          <NavButton>
            <Menu size={17} strokeWidth={1.5} />
          </NavButton>
        </RightTools>
      </Toolbar>
      <Bookmarks>
        <Bookmark>
          <FirefoxIcon />
          Getting Started
        </Bookmark>
        <Bookmark>
          <ShareitIcon />
          SHAREit-WebShare
        </Bookmark>
        <Bookmark>
          <Globe size={16} strokeWidth={1.4} />
          Easy Tutorial TouTube ...
        </Bookmark>
        <Bookmark>
          <Folder size={15} strokeWidth={1.4} />
          Other Bookmarks
        </Bookmark>
      </Bookmarks>
      <PageRow>
        <Page>
          <Heading>Map and Route Example</Heading>
          <MapBox>
            <RoadMap />
            <MapTypes>
              <MapType $on>Map</MapType>
              <MapType>Satellite</MapType>
            </MapTypes>
            <CtrlButton $top={10}>
              <svg width="18" height="18" viewBox="0 0 18 18" fill="none" stroke="#666" strokeWidth="2">
                <path d="M1 6 V1 H6 M12 1 H17 V6 M17 12 V17 H12 M6 17 H1 V12" />
              </svg>
            </CtrlButton>
            <CtrlButton $top={223}>
              <svg width="18" height="30" viewBox="0 0 18 30">
                <circle cx="9" cy="5" r="4.6" fill="#f4a70b" />
                <path d="M5 10 H13 L17 21 L14.5 22 L13 17 V30 H10 V21 H8 V30 H5 V17 L3.5 22 L1 21 Z" fill="#f4a70b" />
                <path d="M6 10 L9 14 L12 10 Z" fill="#c2571a" />
              </svg>
            </CtrlButton>
            <CtrlButton $top={295} $h={81}>
              <ZoomPart>
                <svg width="18" height="18" viewBox="0 0 18 18" fill="#666">
                  <path d="M0 7.5 H7.5 V0 H10.5 V7.5 H18 V10.5 H10.5 V18 H7.5 V10.5 H0 Z" />
                </svg>
              </ZoomPart>
              <ZoomPart $line>
                <svg width="18" height="18" viewBox="0 0 18 18" fill="#666">
                  <rect y="7.5" width="18" height="3" />
                </svg>
              </ZoomPart>
            </CtrlButton>
            <GoogleLogo>
              {logo.map(([ch, c], i) => (
                <LogoLetter key={i} $c={c}>
                  {ch}
                </LogoLetter>
              ))}
            </GoogleLogo>
            <Attribution>
              <AttrItem>Keyboard shortcuts</AttrItem>
              <AttrItem>Map data ©2024</AttrItem>
              <AttrItem>Terms</AttrItem>
              <AttrItem>Report a map error</AttrItem>
            </Attribution>
            <Popup>
              <PopupTitle>Electric Vehicle Charging Station</PopupTitle>
              <PopupLine>
                <strong>Address:</strong> Weligama - Kananke Rd
              </PopupLine>
              <PopupLine>
                <strong>Type:</strong> Electric Vehicle Charging Station
              </PopupLine>
              <PopupClose>
                <X size={13} strokeWidth={1.5} />
              </PopupClose>
            </Popup>
            <Tip>Electric Vehicle Charging Station</Tip>
          </MapBox>
          <Label htmlFor="destination">Destination:</Label>
          <TextInput id="destination" defaultValue="Matara" />
          <SubmitButton type="button">Calculate Route</SubmitButton>
        </Page>
        <ScrollBar>
          <ScrollArrow>
            <ChevronUp size={12} strokeWidth={3} />
          </ScrollArrow>
          <ScrollThumb />
          <ScrollArrow>
            <ChevronDown size={12} strokeWidth={3} />
          </ScrollArrow>
        </ScrollBar>
      </PageRow>
      <Taskbar>
        <StartButton>
          <WindowsLogo />
        </StartButton>
        <SearchBox>
          <Search size={18} strokeWidth={1.3} style={{ transform: "scaleX(-1)" }} />
          Type here to search
          <SearchArt />
        </SearchBox>
        <TaskIcons>
          {apps.map((a) => (
            <TaskIcon key={a.key} $open={a.open} $active={a.active}>
              {a.icon}
            </TaskIcon>
          ))}
        </TaskIcons>
        <Weather>
          <WeatherIcon />
          80°F
        </Weather>
        <Tray>
          <ChevronUp size={15} strokeWidth={1.3} />
          <TrayNetBox />
          <VolumeOff />
          <BatteryIcon />
          <Wifi size={15} strokeWidth={1.3} />
        </Tray>
        <Lang>
          ENG
          <br />
          US
        </Lang>
        <Clock>
          3:06 AM
          <br />
          3/15/2024
        </Clock>
        <Notify>
          <NotifyIcon />
          <NotifyBadge>3</NotifyBadge>
        </Notify>
      </Taskbar>
    </Screen>
  );
};

export default App;
